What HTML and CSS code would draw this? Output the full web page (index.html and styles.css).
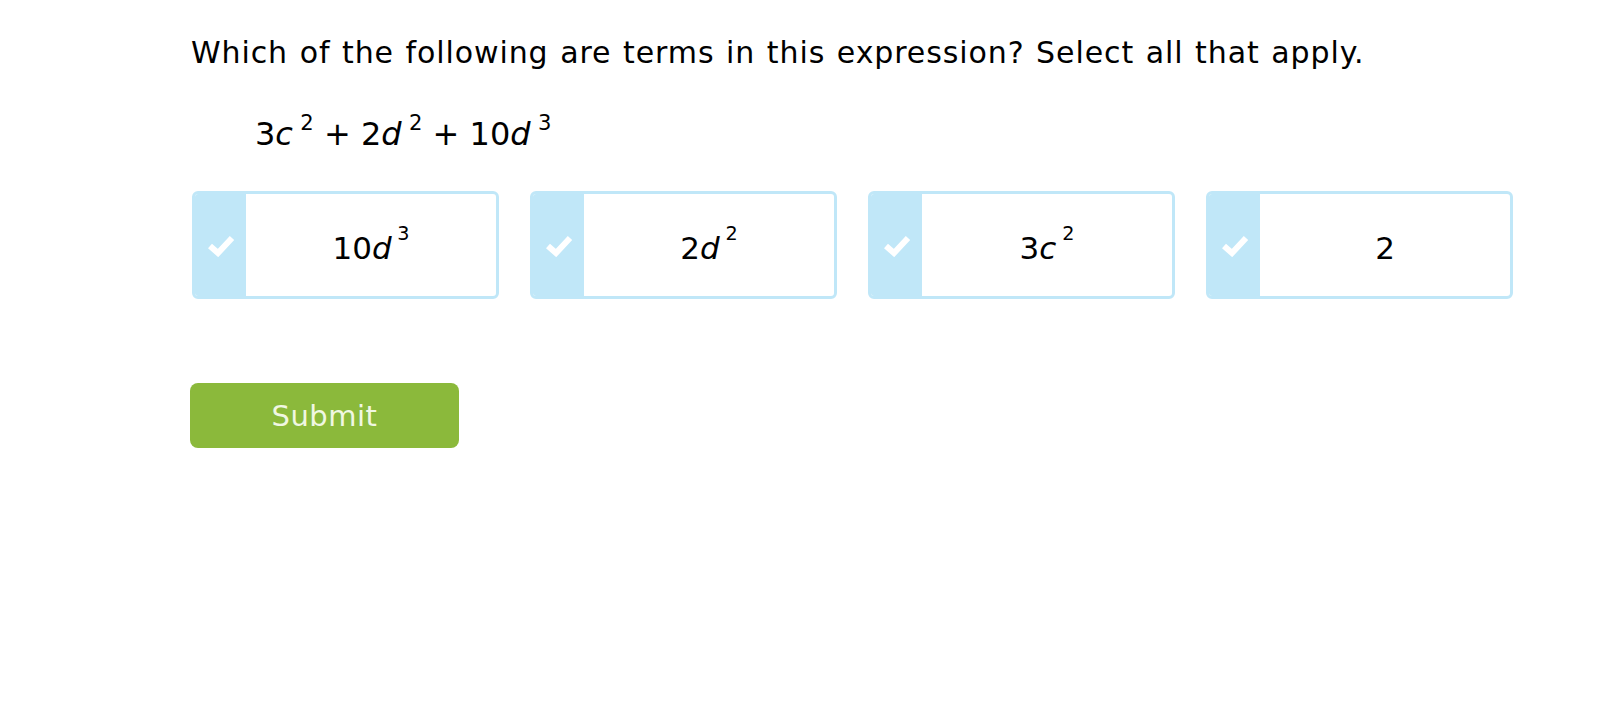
FILE: index.html
```html
<!DOCTYPE html>
<html>
<head>
<meta charset="utf-8">
<link rel="stylesheet" href="styles.css">
</head>
<body>
<div class="page">
  <p class="question">Which of the following are terms in this expression? Select all that apply.</p>
  <div class="expression">3<i>c</i><sup>2</sup> + 2<i>d</i><sup>2</sup> + 10<i>d</i><sup>3</sup></div>
  <div class="choices">
    <div class="card">
      <div class="stripe"><svg class="check" viewBox="0 0 28 24"><polyline points="3,13 11,20 25,5" /></svg></div>
      <div class="label">10<i>d</i><sup>3</sup></div>
    </div>
    <div class="card">
      <div class="stripe"><svg class="check" viewBox="0 0 28 24"><polyline points="3,13 11,20 25,5" /></svg></div>
      <div class="label">2<i>d</i><sup>2</sup></div>
    </div>
    <div class="card">
      <div class="stripe"><svg class="check" viewBox="0 0 28 24"><polyline points="3,13 11,20 25,5" /></svg></div>
      <div class="label">3<i>c</i><sup>2</sup></div>
    </div>
    <div class="card">
      <div class="stripe"><svg class="check" viewBox="0 0 28 24"><polyline points="3,13 11,20 25,5" /></svg></div>
      <div class="label">2</div>
    </div>
  </div>
  <button class="submit">Submit</button>
</div>
</body>
</html>
```
FILE: styles.css
```css
html, body {
  margin: 0;
  background: #ffffff;
}
.page {
  font-family: "DejaVu Sans", Verdana, sans-serif;
  color: #000;
  padding: 33px 0 0 191px;
}
.question {
  margin: 0;
  font-size: 30px;
  line-height: 40px;
  letter-spacing: 0.9px;
  word-spacing: 1.2px;
}
.expression {
  margin: 41px 0 0 64px;
  font-size: 32px;
  line-height: 40px;
}
.expression sup {
  font-size: 0.66em;
  margin-left: 0.35em;
}
sup {
  font-size: 0.62em;
  line-height: 0;
  vertical-align: 0;
  position: relative;
  top: -0.72em;
  margin-left: 0.3em;
}
.choices {
  display: flex;
  gap: 31px;
  margin: 37px 0 0 1px;
}
.card {
  width: 307px;
  height: 108px;
  box-sizing: border-box;
  border: 3px solid #c0e7f8;
  border-radius: 6px;
  display: flex;
  overflow: hidden;
}
.stripe {
  width: 51px;
  background: #c0e7f8;
  display: flex;
  align-items: center;
  justify-content: center;
}
.check {
  width: 28px;
  height: 24px;
}
.check polyline {
  fill: none;
  stroke: #ffffff;
  stroke-width: 6;
  stroke-linecap: butt;
  stroke-linejoin: miter;
}
.label {
  flex: 1;
  display: flex;
  align-items: center;
  justify-content: center;
  font-size: 31px;
  padding-top: 6px;
}
.submit {
  display: block;
  margin: 84px 0 0 -1px;
  width: 269px;
  height: 65px;
  border: none;
  border-radius: 8px;
  background: #8bb93b;
  color: #f0f7e2;
  font-family: "DejaVu Sans", Verdana, sans-serif;
  font-size: 29px;
  letter-spacing: 0.5px;
  padding: 0;
  cursor: pointer;
}
```
